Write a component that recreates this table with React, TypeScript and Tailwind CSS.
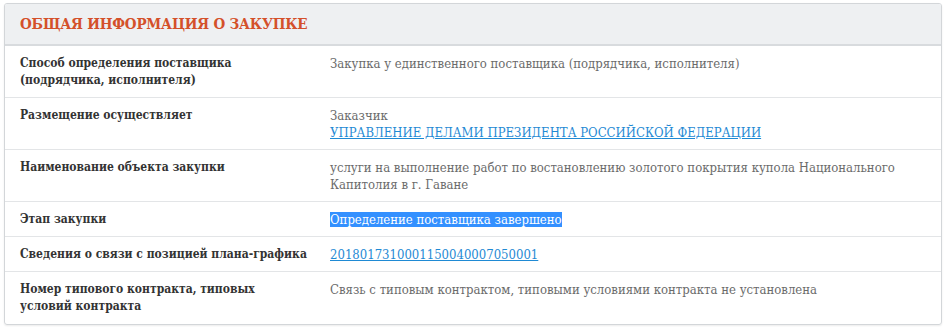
import React from "react";

const rows: { label: React.ReactNode; value: React.ReactNode }[] = [
  {
    label: (
      <>
        Способ определения поставщика
        <br />
        (подрядчика, исполнителя)
      </>
    ),
    value: "Закупка у единственного поставщика (подрядчика, исполнителя)",
  },
  {
    label: "Размещение осуществляет",
    value: (
      <>
        Заказчик
        <br />
        <a href="#" className="text-[#1f8ad4] underline">
          УПРАВЛЕНИЕ ДЕЛАМИ ПРЕЗИДЕНТА РОССИЙСКОЙ ФЕДЕРАЦИИ
        </a>
      </>
    ),
  },
  {
    label: "Наименование объекта закупки",
    value:
      "услуги на выполнение работ по востановлению золотого покрытия купола Национального Капитолия в г. Гаване",
  },
  {
    label: "Этап закупки",
    value: <span className="bg-[#3390ff] text-white">Определение поставщика завершено</span>,
  },
  {
    label: "Сведения о связи с позицией плана-графика",
    value: (
      <a href="#" className="text-[#1f8ad4] underline">
        2018017310001150040007050001
      </a>
    ),
  },
  {
    label: (
      <>
        Номер типового контракта, типовых
        <br />
        условий контракта
      </>
    ),
    value: "Связь с типовым контрактом, типовыми условиями контракта не установлена",
  },
];

export default function App() {
  return (
    <div
      className="bg-white w-[946px] h-[327px] pt-[3px] pl-[4px] pr-[4px]"
      style={{ fontFamily: '"DejaVu Serif Condensed", "DejaVu Serif", serif' }}
    >
      <div className="border border-[#d3d6d9] rounded-[3px] overflow-hidden shadow-[0_1px_2px_rgba(0,0,0,0.08)]">
        <div className="bg-[#eef0f2] h-[42px] border-b-2 border-[#d8dbde] flex items-center pl-[15px]">
          <h2 className="text-[#d4502a] text-[15px] tracking-[-0.2px] font-bold uppercase leading-none">
            Общая информация о закупке
          </h2>
        </div>
        {rows.map((r, i) => (
          <div
            key={i}
            className={`flex leading-[17px] pt-[9px] ${
              i < rows.length - 1 ? "border-b border-[#e3e5e7] pb-[8px]" : "pb-[9px]"
            }`}
          >
            <div className="w-[325px] shrink-0 pl-[15px] pr-2 font-bold text-[12px] text-[#333]">
              {r.label}
            </div>
            <div className="flex-1 text-[13px] text-[#6b6b6b] pr-4">{r.value}</div>
          </div>
        ))}
      </div>
    </div>
  );
}
